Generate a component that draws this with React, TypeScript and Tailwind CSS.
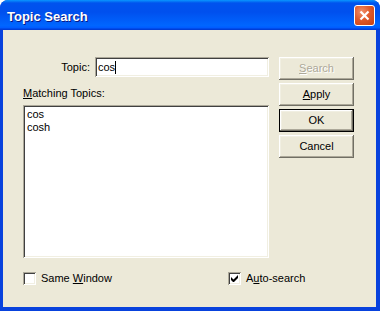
import React from "react";

const sunken =
  "shadow-[inset_1px_1px_#ACA899,inset_-1px_-1px_#fff,inset_2px_2px_#404040,inset_-2px_-2px_#F1EFE2]";
const raised =
  "shadow-[inset_-1px_-1px_#716F64,inset_1px_1px_#fff,inset_-2px_-2px_#ACA899,inset_2px_2px_#F1EFE2]";

const Btn = ({
  children,
  disabled,
  primary,
}: {
  children: React.ReactNode;
  disabled?: boolean;
  primary?: boolean;
}) => (
  <div
    className={
      "w-[75px] h-[23px] flex items-center justify-center bg-[#ECE9D8] " +
      (primary ? "border border-black " : "") +
      raised +
      (disabled ? " text-[#ACA899] [text-shadow:1px_1px_#fff]" : " text-black")
    }
  >
    {children}
  </div>
);

const Check = ({ checked }: { checked?: boolean }) => (
  <div className={"w-[13px] h-[13px] bg-white flex items-center justify-center " + sunken}>
    {checked && (
      <svg width="7" height="7" viewBox="0 0 7 7">
        <path d="M0 2v3l2 2h1l4-4V0L2.5 4.5z" fill="#000" />
      </svg>
    )}
  </div>
);

export default function App() {
  return (
    <div
      className="w-[380px] h-[311px] bg-white text-[11px] leading-[13px] text-black"
      style={{ fontFamily: "'Liberation Sans', Arial, sans-serif" }}
    >
      <div className="w-full h-full flex flex-col rounded-t-[8px] bg-[#0842DD] overflow-hidden">
        {/* title bar */}
        <div className="h-[30px] shrink-0 flex items-center pl-[7px] pr-[5px] bg-[linear-gradient(to_bottom,#0997FF_0%,#0053EE_10%,#0050EE_40%,#0066FF_85%,#005BFF_93%,#003DD7_97%,#003DD7_100%)]">
          <span className="flex-1 pt-[2px] text-white font-bold text-[13px] [text-shadow:1px_1px_#0A1883]">
            Topic Search
          </span>
          <div className="w-[21px] h-[21px] rounded-[3px] border border-white flex items-center justify-center bg-[radial-gradient(circle_at_35%_30%,#F2906B_0%,#E05A2C_45%,#C9400F_100%)]">
            <svg width="11" height="11" viewBox="0 0 11 11">
              <path d="M1.5 1.5l8 8M9.5 1.5l-8 8" stroke="#fff" strokeWidth="2.2" />
            </svg>
          </div>
        </div>

        {/* body */}
        <div className="flex-1 ml-[3px] mr-[4px] mb-[4px] bg-[#ECE9D8] pl-[20px] pt-[27px]">
          <div className="flex gap-[10px]">
            <div className="w-[246px] flex flex-col">
              <div className="flex items-center justify-end gap-[5px] h-[20px]">
                <span>Topic:</span>
                <div className={"w-[174px] h-[20px] bg-white flex items-center pl-[3px] " + sunken}>
                  <span>cos</span>
                  <span className="w-[1px] h-[13px] bg-black" />
                </div>
              </div>
              <div className="mt-[10px] h-[18px]">
                <span className="underline underline-offset-[1px]">M</span>atching Topics:
              </div>
              <div className={"h-[153px] bg-white pt-[3px] pl-[4px] flex flex-col " + sunken}>
                <span>cos</span>
                <span>cosh</span>
              </div>
            </div>
            <div className="flex flex-col gap-[3px]">
              <Btn disabled>
                <span className="underline underline-offset-[1px]">S</span>earch
              </Btn>
              <Btn>
                <span className="underline underline-offset-[1px]">A</span>pply
              </Btn>
              <Btn primary>OK</Btn>
              <Btn>Cancel</Btn>
            </div>
          </div>

          <div className="flex mt-[14px] h-[13px] items-center">
            <div className="w-[205px] flex items-center gap-[5px]">
              <Check />
              <span>
                Same <span className="underline underline-offset-[1px]">W</span>indow
              </span>
            </div>
            <div className="flex items-center gap-[5px]">
              <Check checked />
              <span>
                A<span className="underline underline-offset-[1px]">u</span>to-search
              </span>
            </div>
          </div>
        </div>
      </div>
    </div>
  );
}
